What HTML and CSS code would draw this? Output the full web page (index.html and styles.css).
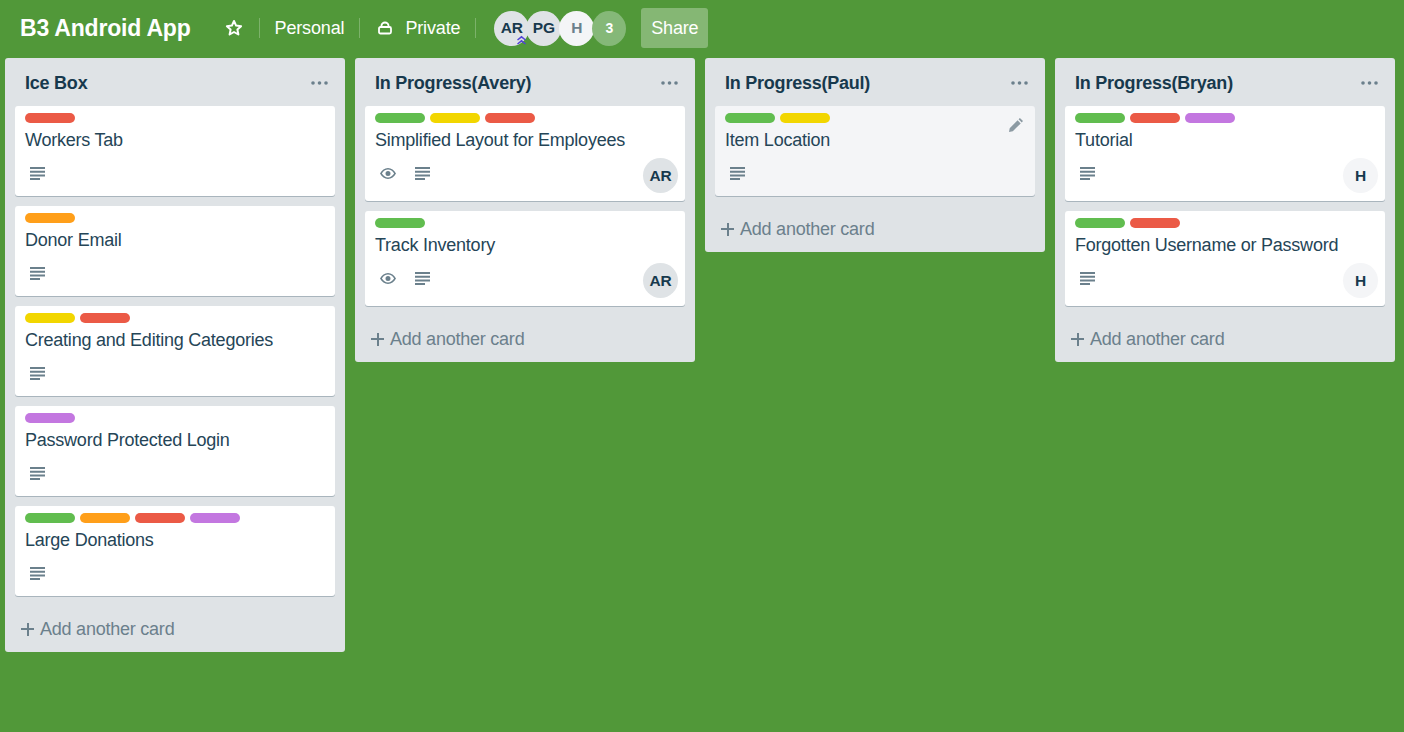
FILE: index.html
```html
<!DOCTYPE html>
<html lang="en">
<head>
  <meta charset="UTF-8">
  <meta name="viewport" content="width=device-width, initial-scale=1.0">
  <title>B3 Android App</title>
  <link rel="stylesheet" href="styles.css">
</head>
<body>
  <svg width="0" height="0" class="defs">
    <symbol id="icon-desc" viewBox="0 0 15 13"><path d="M0 0h15v2H0zM0 3.700h15v2H0zM0 7.400h15v2H0zM0 11h10v2H0z"/></symbol>
    <symbol id="icon-eye" viewBox="0 0 16 11"><path fill-rule="evenodd" d="M8 0c3.300 0 6.200 2.100 8 5.500C14.200 8.900 11.300 11 8 11S1.800 8.900 0 5.500C1.800 2.100 4.700 0 8 0zm0 1.600c-2.500 0-4.700 1.500-6.100 3.900C3.300 7.900 5.500 9.400 8 9.400s4.700-1.500 6.100-3.900C12.700 3.100 10.500 1.600 8 1.600zM8 3a2.500 2.500 0 1 1 0 5 2.500 2.500 0 0 1 0-5z"/></symbol>
    <symbol id="icon-dots" viewBox="0 0 17 4"><circle cx="2" cy="2" r="1.800"/><circle cx="8.500" cy="2" r="1.800"/><circle cx="15" cy="2" r="1.800"/></symbol>
  </svg>

  <header class="board-header">
    <h1 class="board-title">B3 Android App</h1>
    <svg class="star-icon" width="18" height="18" viewBox="0 0 18 18"><path d="M9 2l2.100 4.600 5 .6-3.700 3.400 1 4.900L9 13l-4.400 2.500 1-4.900L1.900 7.200l5-.6z" fill="none" stroke="#fff" stroke-width="2" stroke-linejoin="round"/></svg>
    <span class="header-sep sep-first"></span>
    <span class="header-text">Personal</span>
    <span class="header-sep"></span>
    <svg class="lock-icon" width="14" height="14" viewBox="0 0 14 14"><path d="M3.500 6V4.500a3.500 3 0 0 1 7 0V6" fill="none" stroke="#fff" stroke-width="1.800"/><rect x="1" y="6" width="12" height="6.500" rx="1.500" fill="none" stroke="#fff" stroke-width="1.800"/></svg>
    <span class="header-text">Private</span>
    <span class="header-sep"></span>
    <div class="members">
      <div class="member member-first">AR
        <svg class="admin-mark" width="11" height="11" viewBox="0 0 11 11"><path d="M1.500 5L5.500 1.800 9.500 5M1.500 9L5.500 5.800 9.500 9" fill="none" stroke="#5243d6" stroke-width="1.500"/></svg>
      </div>
      <div class="member">PG</div>
      <div class="member member-light">H</div>
      <div class="member member-more">3</div>
    </div>
    <button class="share-btn">Share</button>
  </header>

  <main class="board">
    <section class="list">
      <div class="list-head">
        <h2>Ice Box</h2>
        <svg class="dots"><use href="#icon-dots"/></svg>
      </div>
      <div class="card">
        <div class="labels"><span class="label red"></span></div>
        <div class="card-title">Workers Tab</div>
        <div class="card-foot"><svg class="badge"><use href="#icon-desc"/></svg></div>
      </div>
      <div class="card">
        <div class="labels"><span class="label orange"></span></div>
        <div class="card-title">Donor Email</div>
        <div class="card-foot"><svg class="badge"><use href="#icon-desc"/></svg></div>
      </div>
      <div class="card">
        <div class="labels"><span class="label yellow"></span><span class="label red"></span></div>
        <div class="card-title">Creating and Editing Categories</div>
        <div class="card-foot"><svg class="badge"><use href="#icon-desc"/></svg></div>
      </div>
      <div class="card">
        <div class="labels"><span class="label purple"></span></div>
        <div class="card-title">Password Protected Login</div>
        <div class="card-foot"><svg class="badge"><use href="#icon-desc"/></svg></div>
      </div>
      <div class="card">
        <div class="labels"><span class="label green"></span><span class="label orange"></span><span class="label red"></span><span class="label purple"></span></div>
        <div class="card-title">Large Donations</div>
        <div class="card-foot"><svg class="badge"><use href="#icon-desc"/></svg></div>
      </div>
      <div class="add-card"><span class="plus"></span>Add another card</div>
    </section>

    <section class="list">
      <div class="list-head">
        <h2>In Progress(Avery)</h2>
        <svg class="dots"><use href="#icon-dots"/></svg>
      </div>
      <div class="card">
        <div class="labels"><span class="label green"></span><span class="label yellow"></span><span class="label red"></span></div>
        <div class="card-title">Simplified Layout for Employees</div>
        <div class="card-foot">
          <svg class="badge eye"><use href="#icon-eye"/></svg>
          <svg class="badge"><use href="#icon-desc"/></svg>
          <div class="member card-member">AR</div>
        </div>
      </div>
      <div class="card">
        <div class="labels"><span class="label green"></span></div>
        <div class="card-title">Track Inventory</div>
        <div class="card-foot">
          <svg class="badge eye"><use href="#icon-eye"/></svg>
          <svg class="badge"><use href="#icon-desc"/></svg>
          <div class="member card-member">AR</div>
        </div>
      </div>
      <div class="add-card"><span class="plus"></span>Add another card</div>
    </section>

    <section class="list">
      <div class="list-head">
        <h2>In Progress(Paul)</h2>
        <svg class="dots"><use href="#icon-dots"/></svg>
      </div>
      <div class="card card-hover">
        <svg class="edit-icon" width="14" height="14" viewBox="0 0 14 14"><path d="M0 14l.7-3.800L8.600 2.300l3.100 3.100-7.900 7.900zM9.600 1.300L10.900 0 14 3.100l-1.300 1.300z"/></svg>
        <div class="labels"><span class="label green"></span><span class="label yellow"></span></div>
        <div class="card-title">Item Location</div>
        <div class="card-foot"><svg class="badge"><use href="#icon-desc"/></svg></div>
      </div>
      <div class="add-card"><span class="plus"></span>Add another card</div>
    </section>

    <section class="list">
      <div class="list-head">
        <h2>In Progress(Bryan)</h2>
        <svg class="dots"><use href="#icon-dots"/></svg>
      </div>
      <div class="card">
        <div class="labels"><span class="label green"></span><span class="label red"></span><span class="label purple"></span></div>
        <div class="card-title">Tutorial</div>
        <div class="card-foot">
          <svg class="badge"><use href="#icon-desc"/></svg>
          <div class="member card-member card-member-light">H</div>
        </div>
      </div>
      <div class="card">
        <div class="labels"><span class="label green"></span><span class="label red"></span></div>
        <div class="card-title">Forgotten Username or Password</div>
        <div class="card-foot">
          <svg class="badge"><use href="#icon-desc"/></svg>
          <div class="member card-member card-member-light">H</div>
        </div>
      </div>
      <div class="add-card"><span class="plus"></span>Add another card</div>
    </section>
  </main>
</body>
</html>
```

FILE: styles.css
```css
* {
  box-sizing: border-box;
}
html, body {
  height: 100%;
}
body {
  margin: 0;
  background: #519839;
  font-family: "Liberation Sans", Arial, sans-serif;
  font-size: 18px;
  color: #17394d;
  letter-spacing: -0.23px;
  overflow: hidden;
}
.defs {
  display: block;
  height: 0;
}

/* top bar */
.board-header {
  display: flex;
  align-items: center;
  height: 58px;
  padding: 0 0 2px 20px;
  color: #fff;
}
.board-title {
  margin: 0;
  font-size: 23px;
  font-weight: bold;
  letter-spacing: -0.2px;
}
.star-icon {
  margin-left: 34px;
}
.header-sep {
  width: 1px;
  height: 20px;
  margin: 0 15px;
  background: rgba(255, 255, 255, 0.25);
}
.sep-first {
  margin-left: 16px;
}
.header-text {
  letter-spacing: -0.15px;
}
.lock-icon {
  margin: 0 13px 0 3px;
}
.members {
  display: flex;
  margin-left: 3px;
}
.member {
  position: relative;
  display: flex;
  align-items: center;
  justify-content: center;
  width: 35px;
  height: 35px;
  margin-right: -2px;
  border-radius: 50%;
  background: #dfe3e6;
  color: #17394d;
  font-size: 15.500px;
  font-weight: bold;
  letter-spacing: -0.2px;
}
.member-first {
  margin-right: -3px;
}
.member-light {
  background: #f4f5f7;
  color: #6b808c;
}
.card-member-light {
  background: #f4f5f7;
}
.member-more {
  width: 34px;
  background: #85b878;
  color: #fff;
  font-size: 14px;
}
.admin-mark {
  position: absolute;
  right: 2px;
  bottom: 0;
}
.share-btn {
  height: 40px;
  margin-left: 17px;
  padding: 0 10px;
  border: none;
  border-radius: 3px;
  background: rgba(255, 255, 255, 0.3);
  color: #fff;
  font: inherit;
  letter-spacing: -0.25px;
}

/* lists */
.board {
  display: flex;
  align-items: flex-start;
  gap: 10px;
  padding: 0 5px;
}
.list {
  width: 340px;
  flex: none;
  padding: 0 10px;
  border-radius: 3px;
  background: #dfe3e6;
}
.list-head {
  display: flex;
  align-items: center;
  justify-content: space-between;
  height: 48px;
  padding: 2px 7px 0 10px;
}
.list-head h2 {
  margin: 0;
  font-size: 18px;
  font-weight: bold;
}
.dots {
  width: 17px;
  height: 4px;
  fill: #6b808c;
}

/* cards */
.card {
  position: relative;
  margin-bottom: 10px;
  padding: 7px 7px 8px 10px;
  border-radius: 3px;
  background: #fff;
  box-shadow: 0 1px 0 rgba(9, 45, 66, 0.25);
}
.card-hover {
  background: #f4f5f7;
}
.edit-icon {
  position: absolute;
  top: 12px;
  right: 12px;
  fill: #8c9aa3;
}
.labels {
  display: flex;
  gap: 5px;
}
.label {
  width: 50px;
  height: 10px;
  border-radius: 5px;
}
.green { background: #61bd4f; }
.yellow { background: #f2d600; }
.orange { background: #ff9f1a; }
.red { background: #eb5a46; }
.purple { background: #c377e0; }

.card-title {
  margin-top: 5px;
  line-height: 24px;
  color: #254557;
}
.card-foot {
  display: flex;
  align-items: flex-start;
  min-height: 30px;
  margin-top: 6px;
  padding-top: 9px;
}
.card-foot .card-member {
  margin: -9px 0 0 auto;
}
.badge {
  width: 15px;
  height: 13px;
  margin-left: 5px;
  fill: #6b808c;
}
.eye {
  width: 16px;
  height: 11px;
  margin-top: 1px;
  margin-right: 14px;
}

/* add card row */
.add-card {
  display: flex;
  align-items: center;
  height: 46px;
  padding-left: 6px;
  color: #6b808c;
}
.plus {
  width: 13px;
  height: 13px;
  margin-right: 6px;
  background:
    linear-gradient(#6b808c, #6b808c) center / 13px 2px no-repeat,
    linear-gradient(#6b808c, #6b808c) center / 2px 13px no-repeat;
}
```
